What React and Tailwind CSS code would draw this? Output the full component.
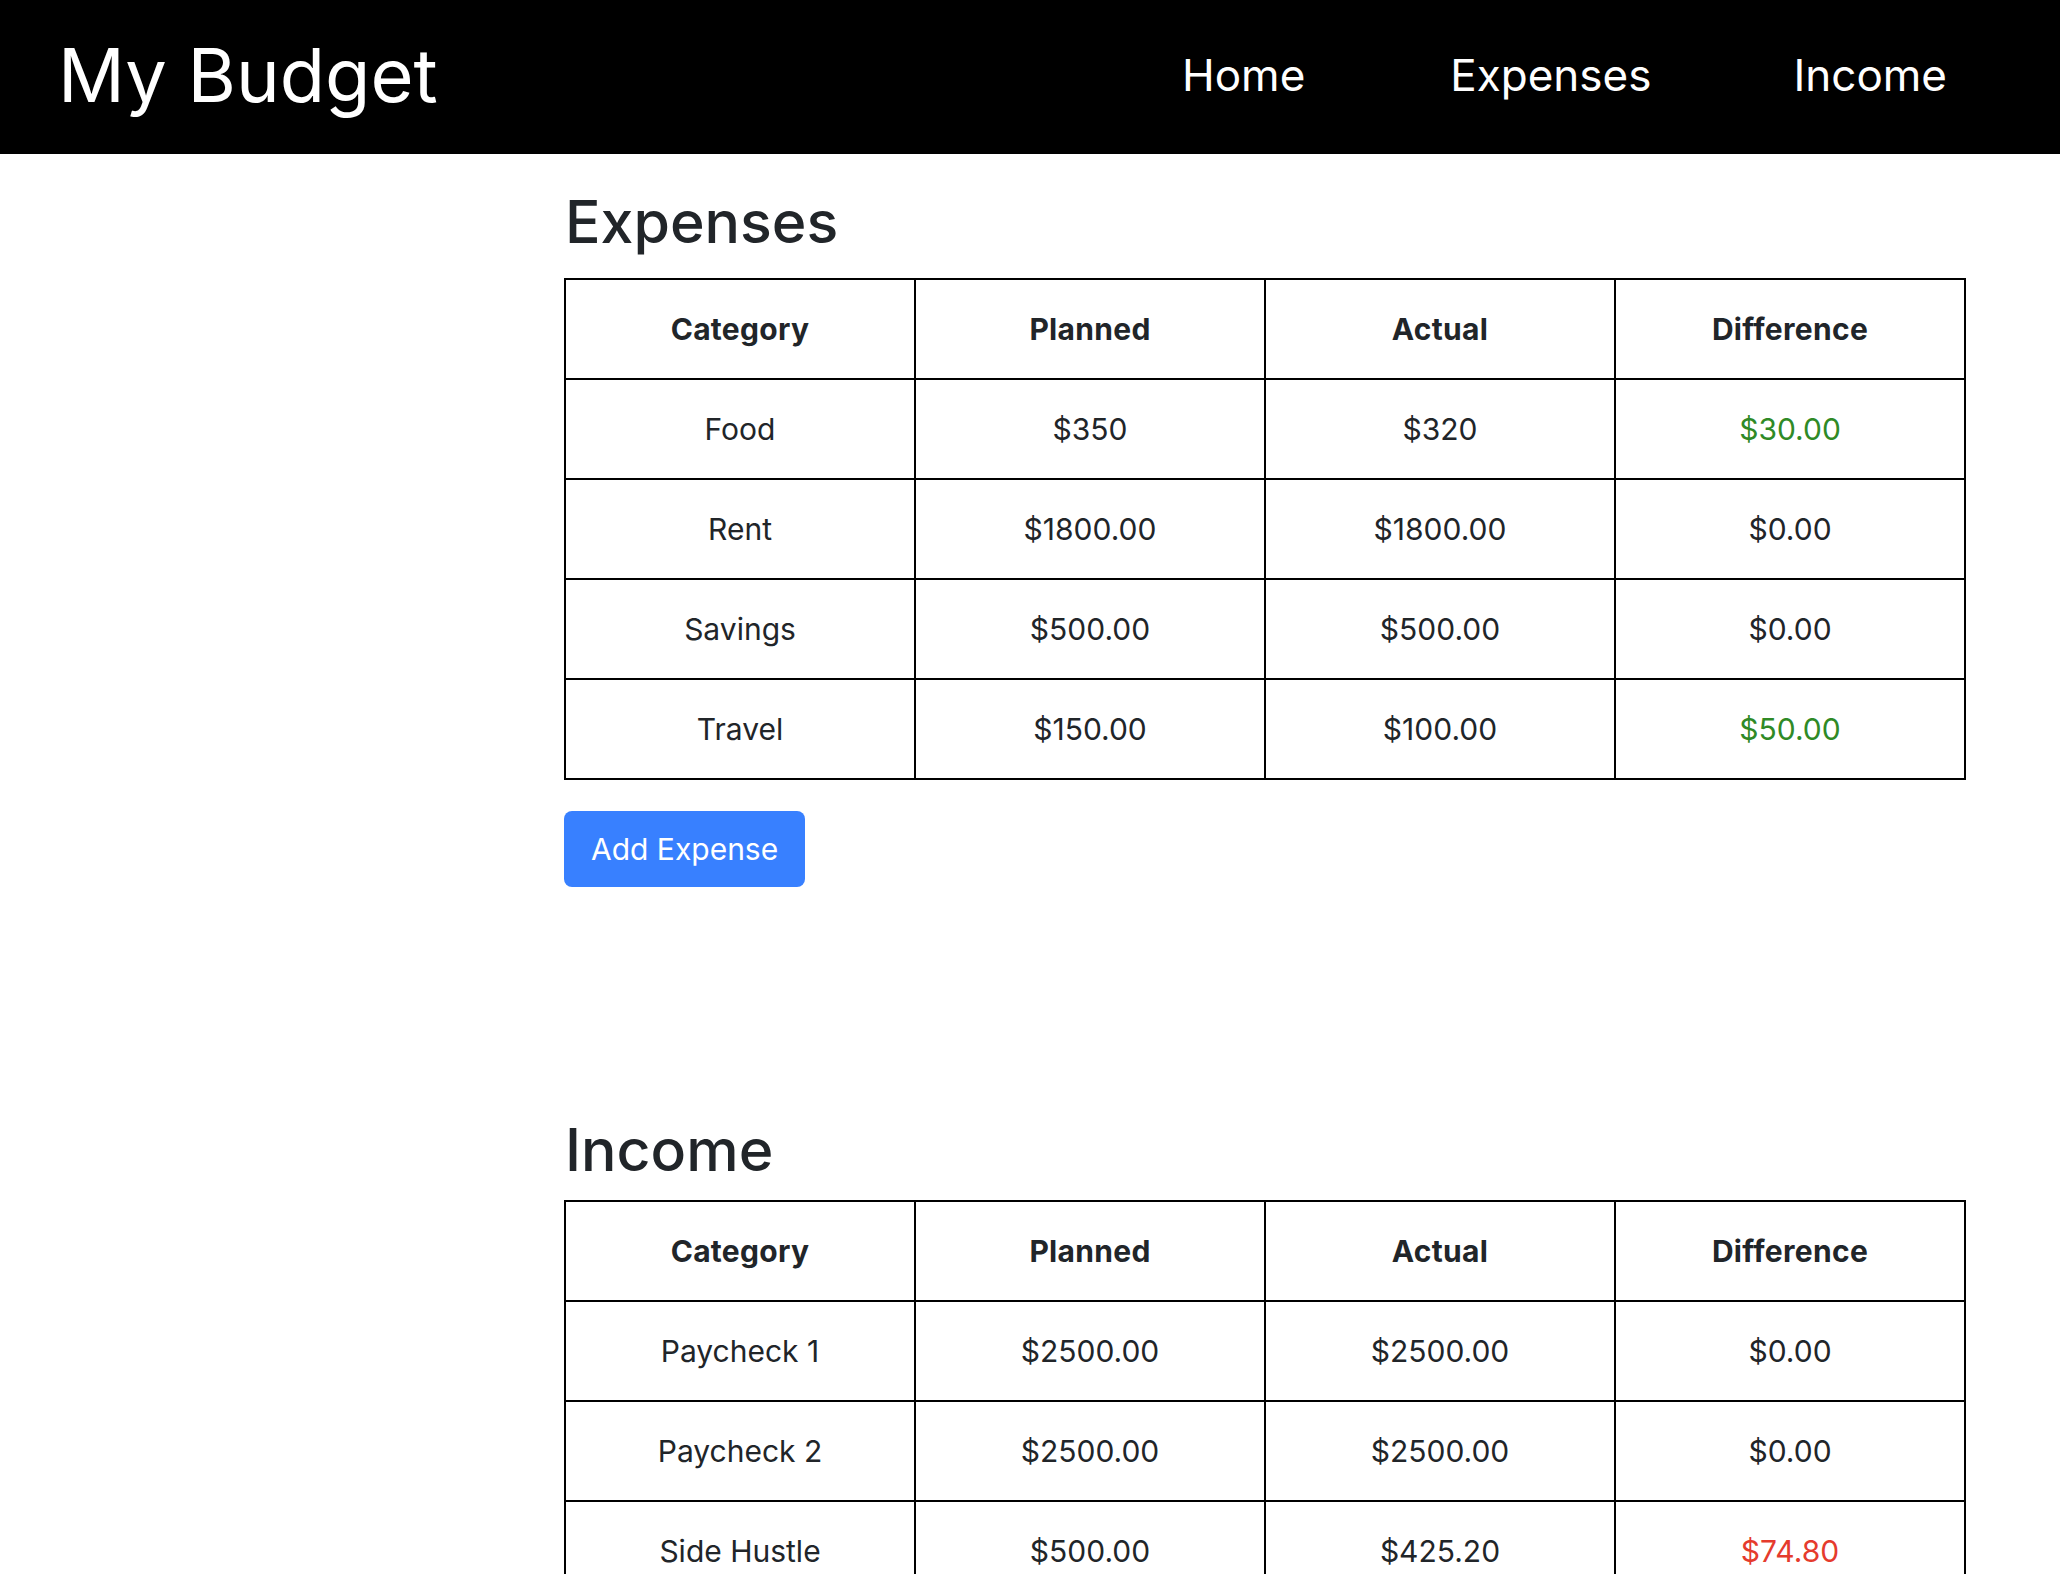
import React from "react";

const font = { fontFamily: "Inter, 'Noto Sans', sans-serif" };

const expenses = [
  ["Food", "$350", "$320", "$30.00", "green"],
  ["Rent", "$1800.00", "$1800.00", "$0.00", ""],
  ["Savings", "$500.00", "$500.00", "$0.00", ""],
  ["Travel", "$150.00", "$100.00", "$50.00", "green"],
];

const income = [
  ["Paycheck 1", "$2500.00", "$2500.00", "$0.00", ""],
  ["Paycheck 2", "$2500.00", "$2500.00", "$0.00", ""],
  ["Side Hustle", "$500.00", "$425.20", "$74.80", "red"],
];

function diffClass(c) {
  if (c === "green") return "text-[#2f8a26]";
  if (c === "red") return "text-[#e53b2d]";
  return "text-[#212529]";
}

function BudgetTable({ rows }) {
  return (
    <table className="w-[1402px] border-collapse border-2 border-black table-fixed">
      <thead>
        <tr className="h-[100px]">
          {["Category", "Planned", "Actual", "Difference"].map((h) => (
            <th key={h} className="border-2 border-black text-center font-bold text-[30px] tracking-[0.01em] text-[#212529] p-0">
              {h}
            </th>
          ))}
        </tr>
      </thead>
      <tbody>
        {rows.map((r) => (
          <tr key={r[0]} className="h-[100px]">
            <td className="border-2 border-black text-center text-[30px] text-[#212529] p-0">{r[0]}</td>
            <td className="border-2 border-black text-center text-[30px] text-[#212529] p-0">{r[1]}</td>
            <td className="border-2 border-black text-center text-[30px] text-[#212529] p-0">{r[2]}</td>
            <td className={"border-2 border-black text-center text-[30px] p-0 " + diffClass(r[4])}>{r[3]}</td>
          </tr>
        ))}
      </tbody>
    </table>
  );
}

export default function App() {
  return (
    <div className="min-h-screen bg-white" style={font}>
      <header className="h-[154px] bg-black flex items-center justify-between pl-[58px] pr-[113px] pb-[4px]">
        <div className="text-white text-[74px] leading-[1.2]">My Budget</div>
        <nav className="flex items-center text-white text-[44px] leading-[1.2]">
          <a className="mr-[145px]">Home</a>
          <a className="mr-[142px]">Expenses</a>
          <a>Income</a>
        </nav>
      </header>
      <main className="ml-[564px] w-[1402px]">
        <h2 className="text-[59px] leading-[72px] text-[#212529] font-medium mt-[32px] mb-[20px] pl-[1px]">Expenses</h2>
        <BudgetTable rows={expenses} />
        <button className="mt-[31px] h-[76px] px-[27px] rounded-[8px] bg-[#3880ff] text-white text-[30px] leading-none">
          Add Expense
        </button>
        <h2 className="text-[59px] leading-[72px] text-[#212529] font-medium mt-[227px] mb-[14px] pl-[1px]">Income</h2>
        <BudgetTable rows={income} />
      </main>
    </div>
  );
}
